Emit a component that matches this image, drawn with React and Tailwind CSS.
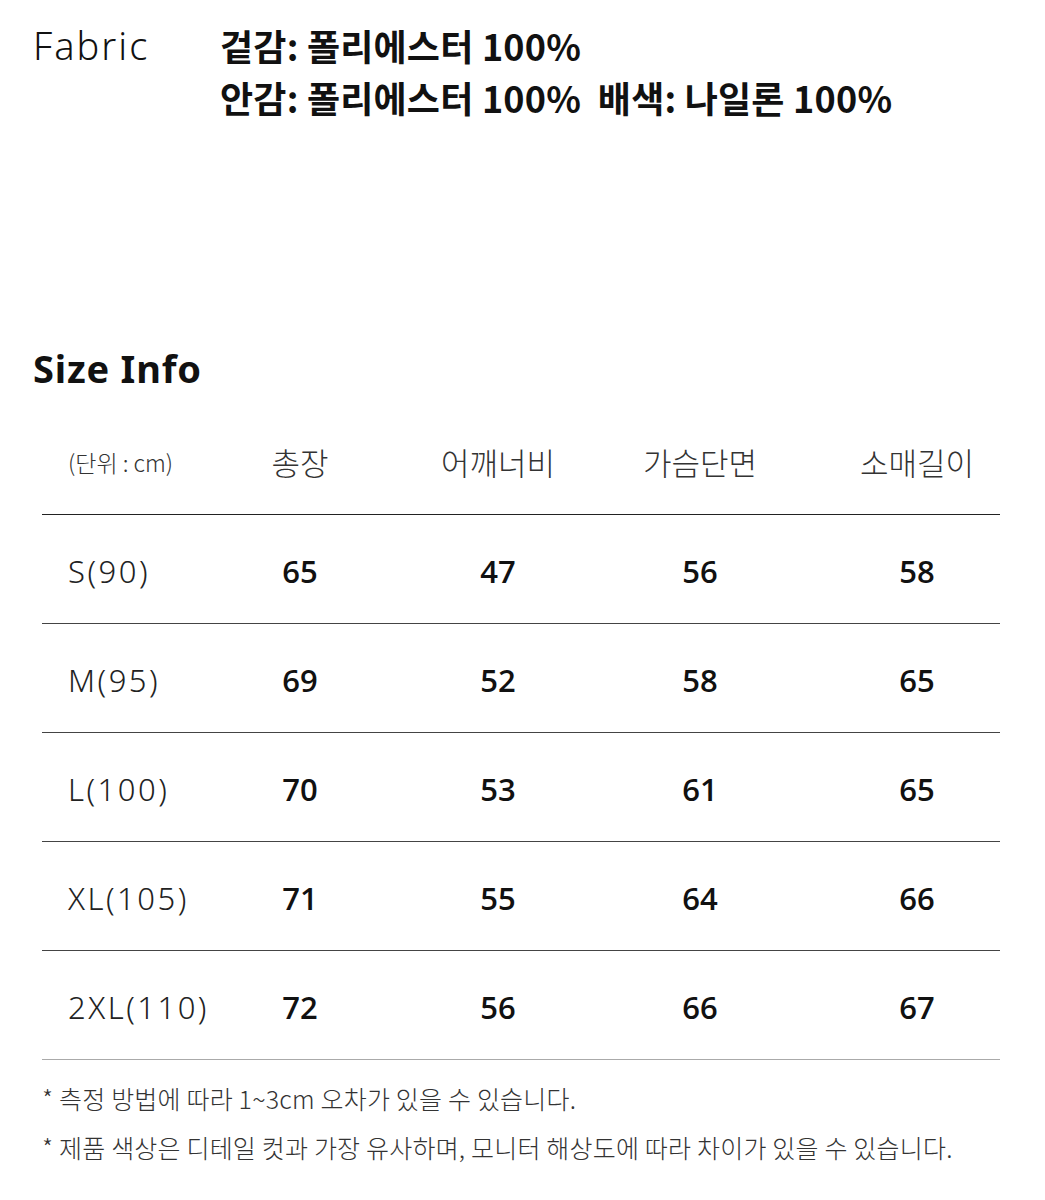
import React from "react";

const headers = ["총장", "어깨너비", "가슴단면", "소매길이"];

const rows = [
  { size: "S(90)", values: ["65", "47", "56", "58"] },
  { size: "M(95)", values: ["69", "52", "58", "65"] },
  { size: "L(100)", values: ["70", "53", "61", "65"] },
  { size: "XL(105)", values: ["71", "55", "64", "66"] },
  { size: "2XL(110)", values: ["72", "56", "66", "67"] },
];

const colWidths = ["w-[200px]", "w-[196px]", "w-[208px]", "w-[196px] pl-[30px]"];

export default function App() {
  return (
    <div className="w-[1045px] min-h-[1200px] bg-white text-[#111] font-['Noto_Sans_CJK_KR','Noto_Sans',sans-serif]">
      {/* Fabric */}
      <div className="flex pt-[19px] pl-[33px]">
        <div className="w-[187px] text-[38px] leading-[52px] font-light tracking-[2px] font-['Noto_Sans',sans-serif]">
          Fabric
        </div>
        <div className="text-[36px] leading-[52px] font-bold tracking-[0.2px]">
          <div>겉감: 폴리에스터 100%</div>
          <div>안감: 폴리에스터 100%&nbsp;&nbsp;배색: 나일론 100%</div>
        </div>
      </div>

      {/* Size Info */}
      <div className="pl-[33px] mt-[221px] text-[38px] leading-[48px] font-bold tracking-[0.8px] font-['Noto_Sans',sans-serif]">
        Size Info
      </div>

      <div className="ml-[42px] w-[958px] mt-[18px]">
        <div className="flex items-center h-[105px] border-b border-[#222]">
          <div className="w-[158px] pl-[26px] text-[23px] font-light text-[#333]">
            (단위 : cm)
          </div>
          {headers.map((h, i) => (
            <div key={h} className={`${colWidths[i]} text-center text-[31px] font-light text-[#333]`}>
              {h}
            </div>
          ))}
        </div>

        {rows.map((r, idx) => (
          <div
            key={r.size}
            className={`flex items-center h-[109px] pt-[4px] border-b ${
              idx === rows.length - 1 ? "border-[#aaa]" : "border-[#444]"
            }`}
          >
            <div className="w-[158px] pl-[26px] text-[31px] font-light tracking-[2.5px] text-[#222] font-['Noto_Sans',sans-serif]">
              {r.size}
            </div>
            {r.values.map((v, i) => (
              <div key={i} className={`${colWidths[i]} text-center text-[31px] font-semibold font-['Open_Sans',sans-serif]`}>
                {v}
              </div>
            ))}
          </div>
        ))}

        <div className="pt-[14px] text-[25px] leading-[49px] font-light text-[#333] tracking-[0.2px]">
          <div>* 측정 방법에 따라 1~3cm 오차가 있을 수 있습니다.</div>
          <div>* 제품 색상은 디테일 컷과 가장 유사하며, 모니터 해상도에 따라 차이가 있을 수 있습니다.</div>
        </div>
      </div>
    </div>
  );
}
